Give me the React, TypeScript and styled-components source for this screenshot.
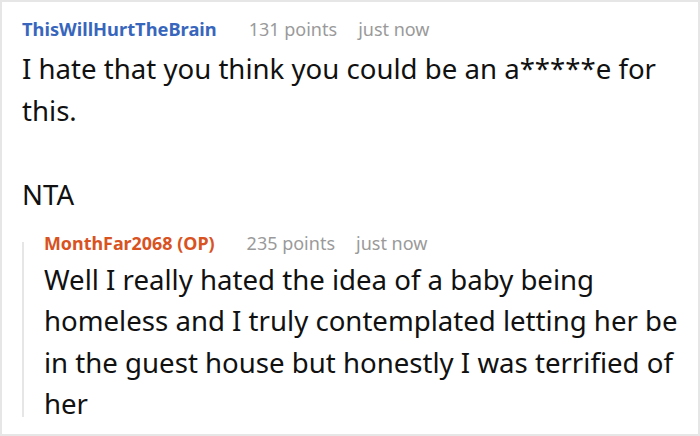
import styled, { createGlobalStyle } from 'styled-components';

const GlobalStyle = createGlobalStyle`
    html, body {
        margin: 0;
        padding: 0;
        background: #ffffff;
    }
`;

const Frame = styled.div`
    box-sizing: border-box;
    width: 700px;
    height: 436px;
    overflow: hidden;
    border: 2px solid #e6e6e6;
    background: #ffffff;
    font-family: 'Noto Sans', 'Open Sans', sans-serif;
    padding: 14px 8px 0 20px;
`;

const Comment = styled.article`
    display: flex;
    flex-direction: column;
`;

const Reply = styled.article`
    position: relative;
    display: flex;
    flex-direction: column;
    margin-top: 15px;
    padding-left: 22px;

    &::before {
        content: '';
        position: absolute;
        left: 0;
        top: 12px;
        bottom: 8px;
        width: 2px;
        background: #e6e6e6;
    }
`;

const Meta = styled.div`
    display: flex;
    align-items: baseline;
    gap: 21px;
    font-size: 18px;
    line-height: 26px;
    color: #9a9a9a;
    white-space: nowrap;
`;

const Author = styled.span<{ $op?: boolean }>`
    font-size: ${({ $op }) => ($op ? '17.9px' : '18.3px')};
    font-weight: 700;
    color: ${({ $op }) => ($op ? '#d8531f' : '#3866bd')};
    margin-right: 11px;
`;

const Body = styled.p<{ $line: number; $gap: number }>`
    margin: ${({ $gap }) => $gap}px 0 0 0;
    color: #111111;
    font-size: 27.6px;
    line-height: ${({ $line }) => $line}px;
`;

export default function App() {
    return (
        <>
            <GlobalStyle />
            <Frame>
                <Comment>
                    <Meta>
                        <Author>ThisWillHurtTheBrain</Author>
                        <span>131 points</span>
                        <span>just now</span>
                    </Meta>
                    <Body $line={42} $gap={5}>
                        I hate that you think you could be an a*****e for this.
                        <br />
                        <br />
                        NTA
                    </Body>
                </Comment>
                <Reply>
                    <Meta>
                        <Author $op>MonthFar2068 (OP)</Author>
                        <span>235 points</span>
                        <span>just now</span>
                    </Meta>
                    <Body $line={41.5} $gap={2.5}>
                        Well I really hated the idea of a baby being homeless and I truly contemplated letting her be
                        in the guest house but honestly I was terrified of her
                    </Body>
                </Reply>
            </Frame>
        </>
    );
}
